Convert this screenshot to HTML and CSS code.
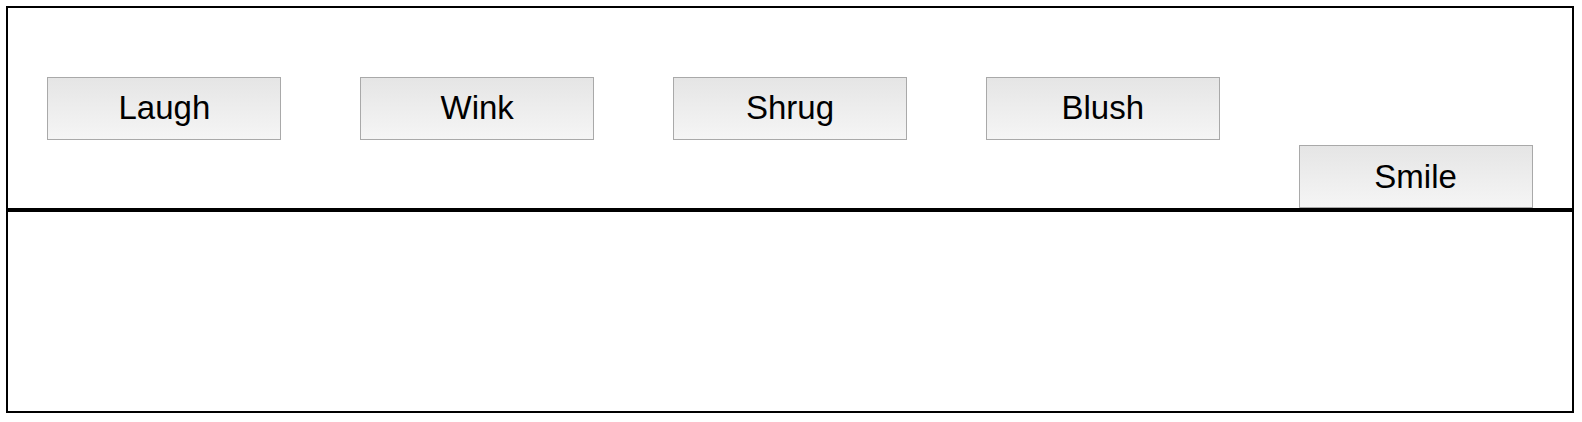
FILE: index.html
```html
<!DOCTYPE html>
<html>
<head>
<meta charset="utf-8">
<link rel="stylesheet" href="styles.css">
</head>
<body>
<div class="frame">
  <div class="toolbar">
    <button class="btn">Laugh</button>
    <button class="btn">Wink</button>
    <button class="btn">Shrug</button>
    <button class="btn">Blush</button>
    <button class="btn btn-low">Smile</button>
  </div>
  <div class="panel"></div>
</div>
</body>
</html>
```

FILE: styles.css
```css
html, body {
  background: #fff;
}
body {
  margin: 6px 8px 6px 6px;
  font-family: "Liberation Sans", Arial, Helvetica, sans-serif;
}
.frame {
  display: flex;
  flex-direction: column;
}
.toolbar {
  height: 200px;
  border: 2px solid #000;
  display: flex;
  justify-content: space-around;
  align-items: center;
}
.panel {
  height: 199px;
  border: 2px solid #000;
}
.btn {
  width: 234px;
  height: 63px;
  box-sizing: border-box;
  border: 1px solid #a9a9a9;
  background: linear-gradient(to bottom, #e5e5e5, #f5f5f5);
  font-family: "Liberation Sans", Arial, Helvetica, sans-serif;
  font-size: 33px;
  color: #000;
  padding: 0;
  margin: 0;
}
.btn-low {
  align-self: flex-end;
}
```
